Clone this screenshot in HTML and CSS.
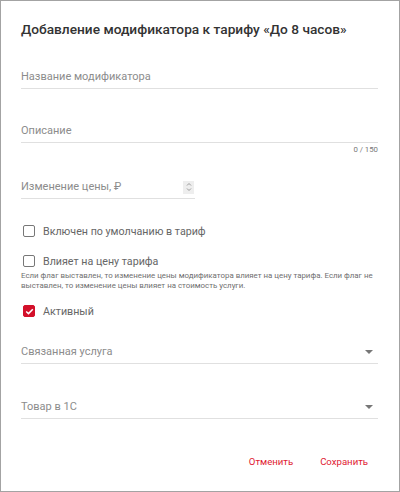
FILE: index.html
```html
<!DOCTYPE html>
<html lang="ru">
<head>
	<meta charset="UTF-8">
	<title>Модификатор</title>
	<link rel="stylesheet" href="styles.css">
</head>
<body>
	<div class="dialog">
		<div class="title">Добавление модификатора к тарифу «До 8 часов»</div>

		<div class="field name-field">
			<span class="label">Название модификатора</span>
		</div>

		<div class="field desc-field">
			<span class="label">Описание</span>
		</div>
		<div class="counter">0 / 150</div>

		<div class="field price-field">
			<span class="label">Изменение цены, ₽</span>
			<span class="spinner">
				<svg width="6" height="10" viewBox="0 0 6 10">
					<path d="M1 3.5L3 1.5L5 3.5M1 6.5L3 8.5L5 6.5" fill="none" stroke="#999" stroke-width="1"/>
				</svg>
			</span>
		</div>

		<label class="check first">
			<span class="box"></span>
			<span>Включен по умолчанию в тариф</span>
		</label>
		<label class="check second">
			<span class="box"></span>
			<span>Влияет на цену тарифа</span>
		</label>
		<div class="hint">Если флаг выставлен, то изменение цены модификатора влияет на цену тарифа. Если флаг не выставлен, то изменение цены влияет на стоимость услуги.</div>
		<label class="check third">
			<span class="box on">
				<svg width="9" height="7" viewBox="0 0 9 7">
					<path d="M1.2 3.5L3.5 5.6L7.8 1.3" fill="none" stroke="#fff" stroke-width="1.5"/>
				</svg>
			</span>
			<span>Активный</span>
		</label>

		<div class="field select service">
			<span class="label">Связанная услуга</span>
			<span class="caret"></span>
		</div>
		<div class="field select goods">
			<span class="label">Товар в 1С</span>
			<span class="caret"></span>
		</div>

		<div class="actions">
			<a href="#" class="btn">Отменить</a>
			<a href="#" class="btn">Сохранить</a>
		</div>
	</div>
</body>
</html>
```

FILE: styles.css
```css
*{
	margin:0;
	padding:0;
	box-sizing:border-box;
	text-decoration:none;
}
body{
	font-family:Roboto, "Noto Sans", sans-serif;
	background:#fff;
}
.dialog{
	width:400px;
	height:492px;
	border:1px solid #a3a3a3;
	padding:18px 21px 0 20px;
}
.title{
	font-size:13.7px;
	line-height:20px;
	font-weight:500;
	color:#333;
}
.field{
	display:flex;
	align-items:center;
	justify-content:space-between;
	border-bottom:1px solid #e0e0e0;
	padding-bottom:3px;
}
.label{
	font-size:11px;
	line-height:16px;
	color:#8c8c8c;
}
.name-field{margin-top:30px;}
.desc-field{margin-top:34px;}
.counter{
	text-align:right;
	font-size:7.8px;
	line-height:12px;
	color:#777;
	margin-top:1px;
}
.price-field{
	width:174px;
	margin-top:23px;
}
.spinner{
	width:11px;
	height:13px;
	background:#eee;
	display:flex;
	align-items:center;
	justify-content:center;
	margin-right:1px;
}
.check{
	display:flex;
	align-items:center;
	height:20px;
	font-size:10.7px;
	color:#666;
	cursor:pointer;
}
.check.first{margin-top:22px;}
.check.second{margin-top:10px;}
.check.third{margin-top:10px;}
.box{
	width:12px;
	height:12px;
	border:1.5px solid #777;
	border-radius:2px;
	margin:0 8px 0 2px;
	display:flex;
	align-items:center;
	justify-content:center;
}
.box.on{
	background:#d3102a;
	border-color:#d3102a;
}
.hint{
	font-size:7.9px;
	line-height:10px;
	color:#6f6f6f;
}
.select{margin-top:23px;}
.select.goods{margin-top:35px;}
.caret{
	width:0;
	height:0;
	border-left:4px solid transparent;
	border-right:4px solid transparent;
	border-top:4px solid #777;
	margin-right:5px;
}
.actions{
	display:flex;
	justify-content:flex-end;
	gap:27px;
	margin-top:35px;
	padding-right:10px;
}
.btn{
	font-size:9.6px;
	line-height:16px;
	color:#e01932;
}
```
